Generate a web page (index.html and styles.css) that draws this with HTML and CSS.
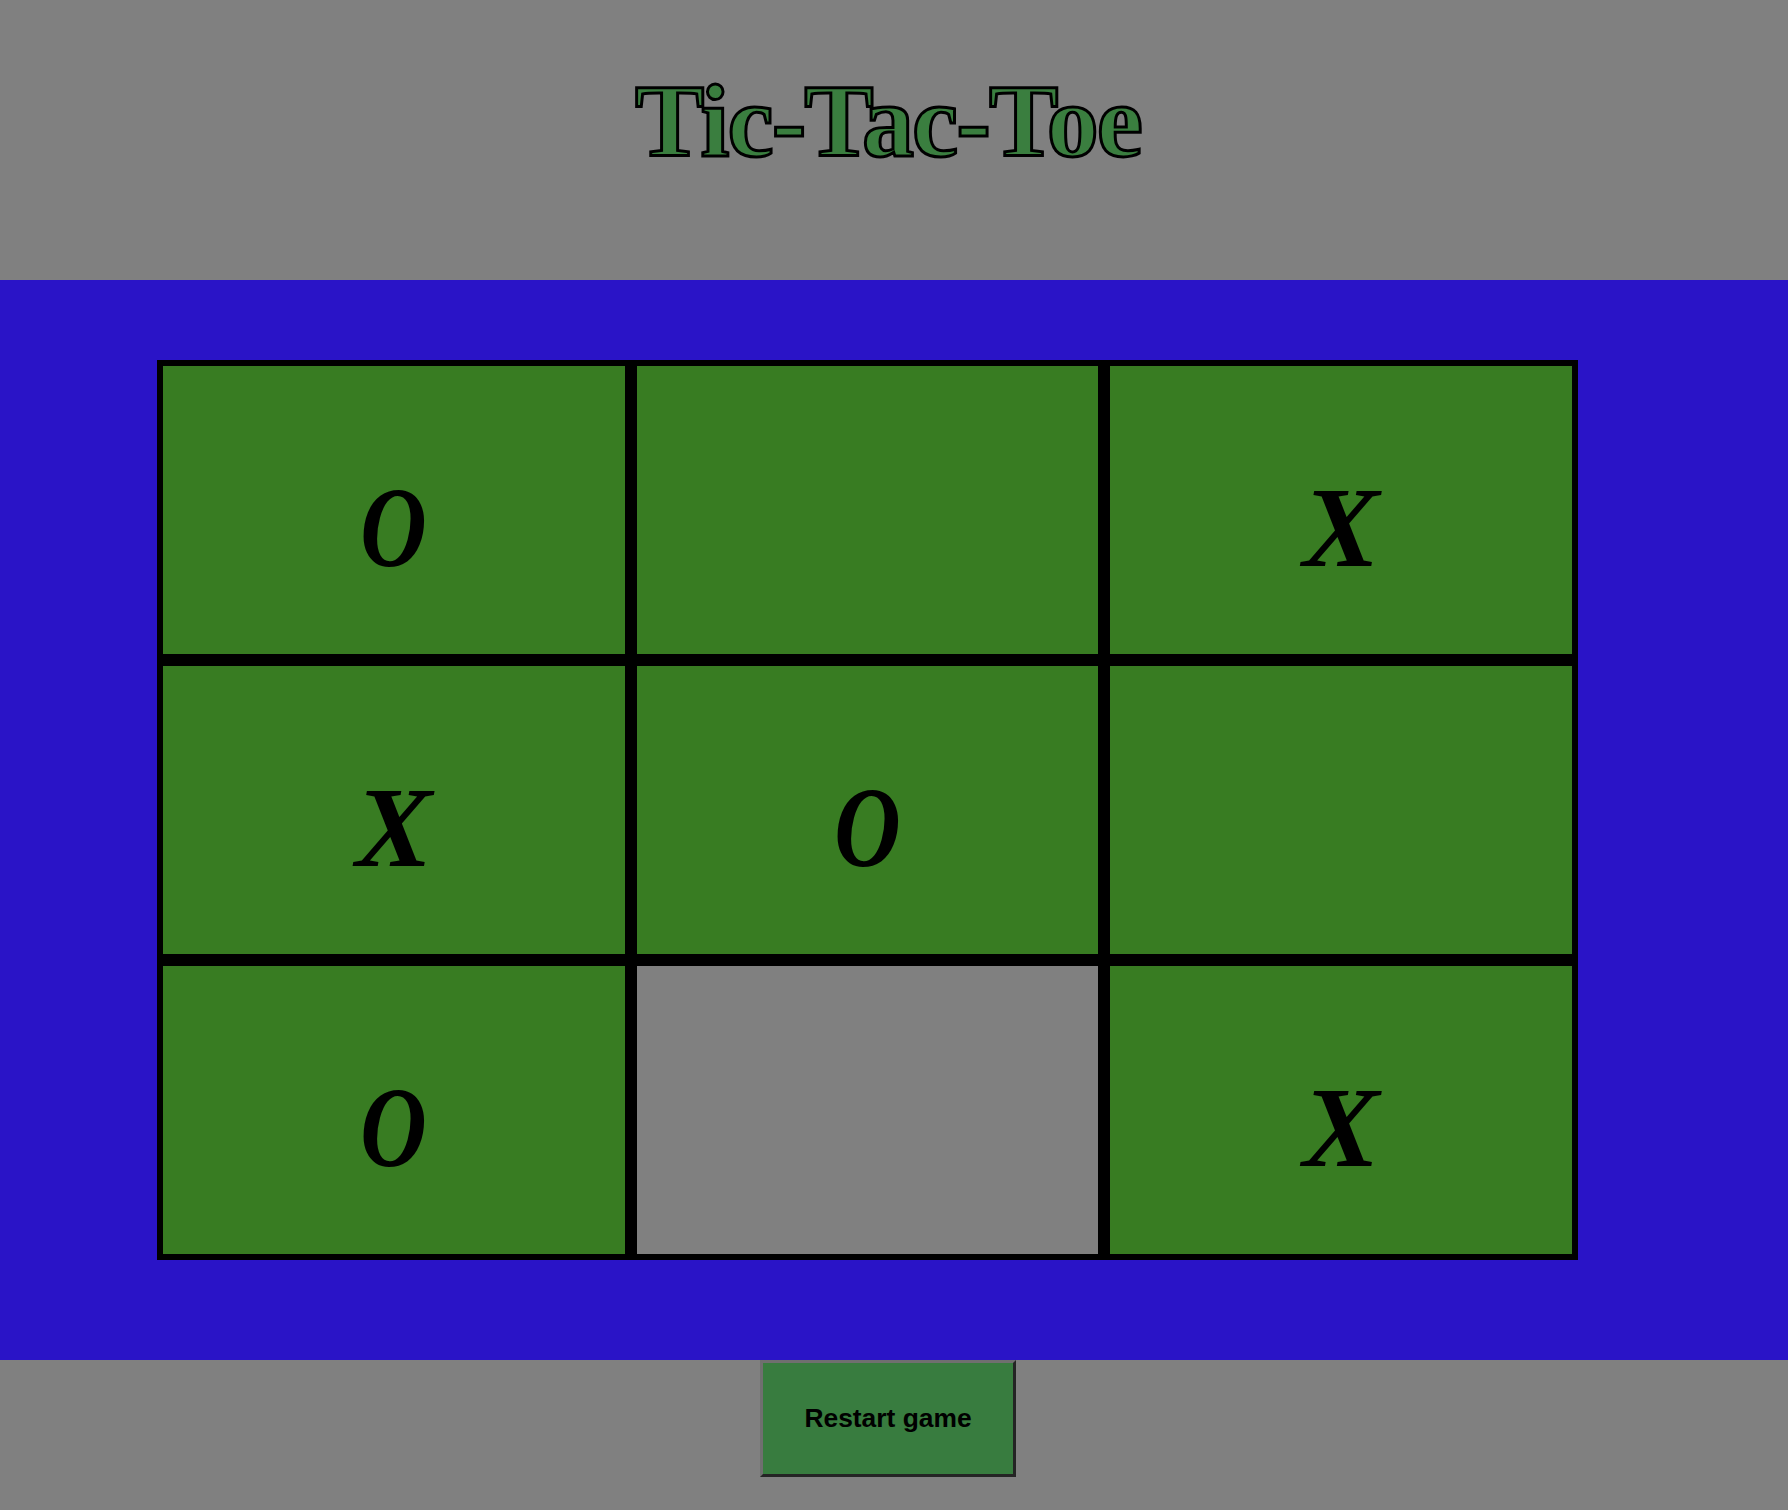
FILE: index.html
```html
<!DOCTYPE html>
<html lang="en">
<head>
<meta charset="utf-8">
<title>Tic-Tac-Toe</title>
<link rel="stylesheet" href="styles.css">
</head>
<body>
<header class="header">
  <h1 class="title">Tic-Tac-Toe</h1>
</header>
<main class="board-area">
  <div class="board">
    <div class="cell"><span class="mark mark-o">O</span></div>
    <div class="cell"></div>
    <div class="cell"><span class="mark mark-x">X</span></div>
    <div class="cell"><span class="mark mark-x">X</span></div>
    <div class="cell"><span class="mark mark-o">O</span></div>
    <div class="cell"></div>
    <div class="cell"><span class="mark mark-o">O</span></div>
    <div class="cell cell-hover"></div>
    <div class="cell"><span class="mark mark-x">X</span></div>
  </div>
</main>
<footer class="controls">
  <button class="restart" type="button">Restart game</button>
</footer>
</body>
</html>
```
FILE: styles.css
```css
html, body {
  margin: 0;
  padding: 0;
}

body {
  background: #808080;
  min-height: 1510px;
}

.header {
  box-sizing: border-box;
  height: 280px;
  padding: 61px 12px 0 0;
  text-align: center;
}

.title {
  margin: 0;
  font-family: "Liberation Serif", "Times New Roman", serif;
  font-weight: bold;
  font-size: 104px;
  line-height: 1.15;
  letter-spacing: -2px;
  color: #3a7e3f;
  -webkit-text-stroke: 3px #000;
}

.board-area {
  background: #2a14c7;
  padding: 80px 0 100px 157px;
}

.board {
  display: grid;
  grid-template-columns: repeat(3, 1fr);
  width: 1421px;
}

.cell {
  box-sizing: border-box;
  height: 300px;
  border: 6px solid #000;
  background: #387c22;
  display: flex;
  align-items: center;
  justify-content: center;
  padding-top: 34px;
  font-family: "Liberation Serif", "Times New Roman", serif;
  font-style: italic;
  font-weight: bold;
  font-size: 115px;
  line-height: 1;
  color: #000;
}

.cell-hover {
  background: #808080;
}

.mark {
  display: inline-block;
}

.mark-o {
  transform: scaleX(0.8);
}

.controls {
  display: flex;
  justify-content: center;
  padding-right: 12px;
}

.restart {
  box-sizing: border-box;
  width: 256px;
  height: 117px;
  margin: 0;
  padding: 0;
  background: #387c3f;
  border-style: solid;
  border-width: 3px;
  border-color: #6f6f6f #242424 #242424 #6f6f6f;
  font-family: "Liberation Sans", Arial, sans-serif;
  font-weight: bold;
  font-size: 26.4px;
  color: #000;
}
```
